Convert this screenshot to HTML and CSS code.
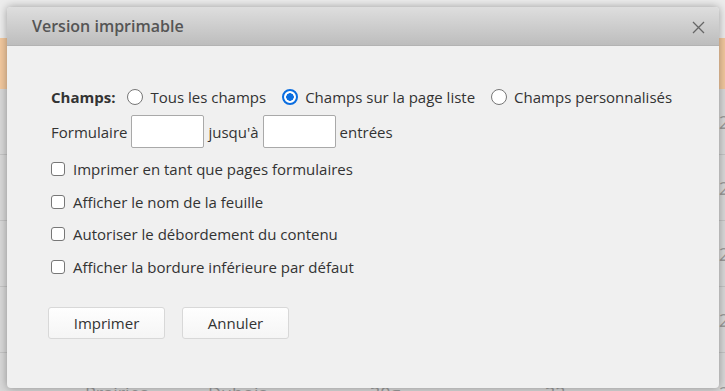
FILE: index.html
```html
<!DOCTYPE html>
<html lang="fr">
<head>
    <meta charset="UTF-8">
    <meta name="viewport" content="width=device-width, initial-scale=1.0">
    <title>Version imprimable</title>
    <link rel="stylesheet" href="styles.css">
</head>
<body>
    <!-- page behind the dialog -->
    <div class="page">
        <div class="page-top"></div>
        <div class="page-band"></div>
        <div class="page-row"><span class="num">2</span></div>
        <div class="page-row"><span class="num">2</span></div>
        <div class="page-row"><span class="num">2</span></div>
        <div class="page-row"><span class="num">2</span></div>
        <div class="page-row last">
            <span class="cell">Prairies</span>
            <span class="cell">Mamie Dubois</span>
            <span class="cell">Sarcel 30g</span>
            <span class="cell">32</span>
            <span class="num">2</span>
        </div>
    </div>

    <div class="dialog">
        <div class="dialog-header">
            <h2>Version imprimable</h2>
            <button type="button" class="close-btn" aria-label="Fermer">
                <svg width="13" height="13" viewBox="0 0 13 13">
                    <path d="M1 1 L12 12 M12 1 L1 12" stroke="#666" stroke-width="1.3" fill="none"/>
                </svg>
            </button>
        </div>

        <form class="dialog-body">
            <div class="field-row">
                <span class="field-label">Champs:</span>
                <label class="radio"><input type="radio" name="champs"> Tous les champs</label>
                <label class="radio"><input type="radio" name="champs" checked> Champs sur la page liste</label>
                <label class="radio"><input type="radio" name="champs"> Champs personnalisés</label>
            </div>

            <div class="range-row">
                <span>Formulaire</span>
                <input type="text" class="num-input">
                <span>jusqu'à</span>
                <input type="text" class="num-input">
                <span>entrées</span>
            </div>

            <label class="check"><input type="checkbox"> Imprimer en tant que pages formulaires</label>
            <label class="check"><input type="checkbox"> Afficher le nom de la feuille</label>
            <label class="check"><input type="checkbox"> Autoriser le débordement du contenu</label>
            <label class="check"><input type="checkbox"> Afficher la bordure inférieure par défaut</label>

            <div class="actions">
                <button type="button" class="btn btn-print">Imprimer</button>
                <button type="button" class="btn btn-cancel">Annuler</button>
            </div>
        </form>
    </div>
</body>
</html>
```

FILE: styles.css
```css
body {
    margin: 0;
    width: 725px;
    height: 391px;
    overflow: hidden;
    position: relative;
    font-family: "Open Sans", "DejaVu Sans", sans-serif;
    font-size: 15px;
    color: #333;
    background-color: #d6d6d6;
}

/* background page, dimmed */
.page {
    display: flex;
    flex-direction: column;
    height: 391px;
    overflow: hidden;
}

.page-top {
    height: 38px;
    flex-shrink: 0;
    background-color: #ececec;
}

.page-band {
    height: 51px;
    flex-shrink: 0;
    background-color: #f2c89e;
}

.page-row {
    height: 65px;
    flex-shrink: 0;
    border-bottom: 1px solid #c4c4c4;
    background-color: #d8d8d8;
    display: flex;
    align-items: center;
    color: #9a9a9a;
    font-size: 18px;
    line-height: 20px;
}

.page-row.last {
    height: 38px;
    align-items: flex-end;
    border-bottom: none;
}

.page-row .cell {
    margin-bottom: -12px;
    margin-left: 85px;
    width: 80px;
}

.page-row .cell:nth-child(2) {
    margin-left: 43px;
    width: 120px;
}

.page-row .cell:nth-child(3) {
    margin-left: 42px;
}

.page-row .cell:nth-child(4) {
    margin-left: 95px;
}

.page-row .num {
    margin-left: auto;
    width: 6px;
    overflow: hidden;
}

.page-row.last .num {
    margin-bottom: -12px;
}

/* dialog */
.dialog {
    position: absolute;
    left: 7px;
    top: 7px;
    width: 712px;
    height: 381px;
    background-color: #f0f0f0;
    border-radius: 4px;
    box-shadow: 0 0 8px rgba(0, 0, 0, 0.35);
    overflow: hidden;
}

.dialog-header {
    height: 39px;
    display: flex;
    align-items: center;
    justify-content: space-between;
    padding: 0 14px 0 25px;
    background: linear-gradient(#dedede, #bdbdbd);
    border-bottom: 1px solid #b3b3b3;
    box-sizing: border-box;
}

.dialog-header h2 {
    margin: 0;
    font-size: 16px;
    font-weight: 600;
    color: #555;
}

.close-btn {
    border: none;
    background: none;
    padding: 0;
    width: 13px;
    height: 13px;
    margin-top: 2px;
    cursor: pointer;
}

.close-btn svg {
    display: block;
}

.dialog-body {
    display: flex;
    flex-direction: column;
    padding: 40px 0 0 44px;
}

.field-row {
    display: flex;
    align-items: center;
    height: 22px;
}

.field-label {
    font-weight: 700;
    margin-right: 12px;
}

.radio {
    display: flex;
    align-items: center;
    margin-right: 16px;
}

.radio input {
    appearance: none;
    width: 16px;
    height: 16px;
    margin: 0 7px 0 0;
    border: 1px solid #767676;
    border-radius: 50%;
    background-color: #fff;
    box-sizing: border-box;
}

.radio input:checked {
    border: 2px solid #0b6ee0;
    background: radial-gradient(circle, #0b6ee0 0 3.5px, #fff 4px);
}

.range-row {
    display: flex;
    align-items: center;
    margin-top: 7px;
    gap: 4px;
}

.num-input {
    width: 73px;
    height: 33px;
    box-sizing: border-box;
    border: 1px solid #a9a9a9;
    border-radius: 2px;
    background-color: #fff;
    margin: 0;
}

.check {
    display: flex;
    align-items: center;
    height: 22px;
    margin-top: 10.67px;
}

.range-row + .check {
    margin-top: 10px;
}

.check input {
    appearance: none;
    width: 14px;
    height: 14px;
    margin: 0 8px 0 0;
    border: 1px solid #777;
    border-radius: 3px;
    background-color: #fff;
    box-sizing: border-box;
}

.actions {
    display: flex;
    gap: 17px;
    margin: 29px 0 0 -3px;
}

.btn {
    height: 32px;
    font-family: inherit;
    font-size: 15px;
    color: #333;
    border: 1px solid #d8d8d8;
    border-radius: 3px;
    background: linear-gradient(#fefefe, #f5f5f5);
    cursor: pointer;
}

.btn-print {
    width: 117px;
}

.btn-cancel {
    width: 107px;
}
```
